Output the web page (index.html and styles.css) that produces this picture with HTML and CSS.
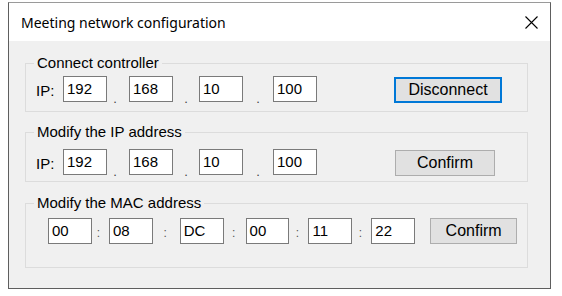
FILE: index.html
```html
<!DOCTYPE html>
<html>
<head>
<meta charset="utf-8">
<link rel="stylesheet" href="styles.css">
</head>
<body>
<div class="window">
  <div class="titlebar">
    <span class="title">Meeting network configuration</span>
    <svg class="close" viewBox="0 0 13 13" width="13" height="13"><path d="M0.5 0.5 L12.5 12.5 M12.5 0.5 L0.5 12.5" stroke="#000" stroke-width="1.1" fill="none"/></svg>
  </div>
  <div class="content">
    <fieldset class="group g1">
      <legend>Connect controller</legend>
      <div class="row">
        <span class="lbl">IP:</span>
        <span class="field">192</span><span class="sep dot s1">.</span>
        <span class="field">168</span><span class="sep dot s2">.</span>
        <span class="field">10</span><span class="sep dot s3">.</span>
        <span class="field">100</span>
        <button class="btn primary">Disconnect</button>
      </div>
    </fieldset>
    <fieldset class="group g2">
      <legend>Modify the IP address</legend>
      <div class="row">
        <span class="lbl">IP:</span>
        <span class="field">192</span><span class="sep dot s1">.</span>
        <span class="field">168</span><span class="sep dot s2">.</span>
        <span class="field">10</span><span class="sep dot s3">.</span>
        <span class="field">100</span>
        <button class="btn confirm-ip">Confirm</button>
      </div>
    </fieldset>
    <fieldset class="group g3">
      <legend>Modify the MAC address</legend>
      <div class="row mac">
        <span class="field">00</span><span class="sep colon m1">:</span>
        <span class="field">08</span><span class="sep colon m2">:</span>
        <span class="field">DC</span><span class="sep colon m3">:</span>
        <span class="field">00</span><span class="sep colon m4">:</span>
        <span class="field">11</span><span class="sep colon m5">:</span>
        <span class="field">22</span>
        <button class="btn confirm-mac">Confirm</button>
      </div>
    </fieldset>
  </div>
</div>
</body>
</html>
```
FILE: styles.css
```css
* { box-sizing: border-box; }
body {
  margin: 0;
  background: #ffffff;
  font-family: "Liberation Sans", Arial, sans-serif;
  color: #000;
}
.window {
  margin: 2px 0 0 8px;
  width: 543px;
  height: 287px;
  border: 1px solid #5e5e5e;
  border-top-color: #9a9a9a;
  background: #f0f0f0;
  display: flex;
  flex-direction: column;
}
.titlebar {
  height: 38px;
  flex: none;
  background: #ffffff;
  display: flex;
  align-items: center;
  justify-content: space-between;
  padding: 1px 12px 0 12px;
}
.title {
  font-family: "Noto Sans", sans-serif;
  font-size: 14px;
}
.close { display: block; }
.content {
  padding: 14px 22px 0 16px;
  display: flex;
  flex-direction: column;
}
.group {
  margin: 0;
  min-width: 0;
  border: 1px solid #dcdcdc;
  padding: 5px 10px 9px 8px;
}
.group legend {
  padding: 0 3px;
  font-size: 15px;
  line-height: 16px;
}
.g2 { margin-top: 12px; padding-top: 9px; padding-bottom: 6px; }
.g3 { margin-top: 13px; padding-top: 7px; padding-bottom: 23px; }
.row {
  display: flex;
  align-items: flex-start;
  height: 26px;
  font-size: 15px;
}
.lbl {
  width: 27px;
  margin-left: 2px;
  line-height: 26px;
  padding-top: 2px;
}
.field {
  width: 44px;
  height: 26px;
  border: 1px solid #7a7a7a;
  background: #ffffff;
  padding-left: 3px;
  line-height: 24px;
}
.sep {
  display: flex;
  justify-content: center;
  align-items: flex-end;
  line-height: 15px;
  color: #444;
}
.dot { height: 30px; margin-bottom: -4px; font-size: 13px; }
.s1 { width: 16px; margin-right: 6px; }
.s2 { width: 26px; }
.s3 { width: 30px; }
.colon { height: 26px; align-items: center; padding-top: 4px; font-size: 12px; color: #555; }
.mac { padding-left: 14px; }
.m1 { width: 13px; margin-right: 4px; }
.m2 { width: 25px; margin-right: 2px; }
.m3 { width: 20px; margin-right: 2px; }
.m4 { width: 16px; margin-right: 3px; }
.m5 { width: 16px; margin-right: 3px; }
.btn {
  font-family: "Liberation Sans", Arial, sans-serif;
  font-size: 16px;
  color: #000;
  background: #e1e1e1;
  border: 1px solid #adadad;
  height: 26px;
  padding: 0;
  margin-top: 1px;
}
.primary {
  border: 2px solid #0078d7;
  width: 108px;
  margin-left: 77px;
}
.confirm-ip { width: 100px; margin-left: 78px; }
.confirm-mac { width: 87px; margin-left: 15px; margin-top: 0; }
```
